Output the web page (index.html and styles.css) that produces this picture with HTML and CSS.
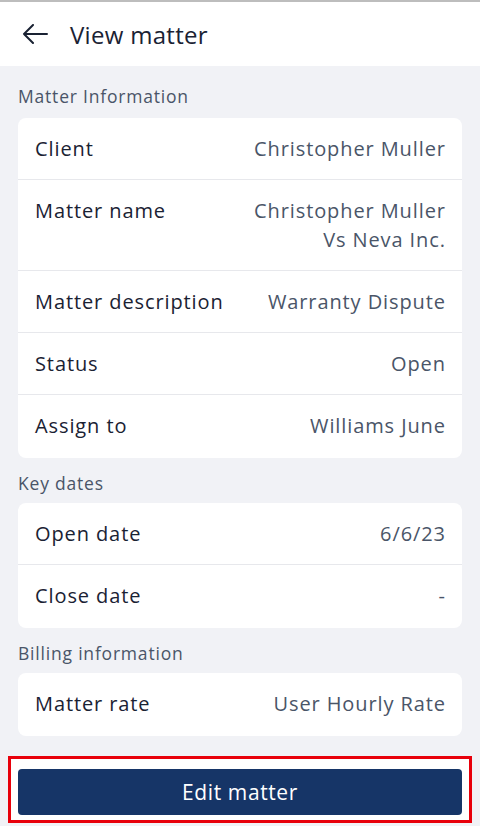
FILE: index.html
```html
<!DOCTYPE html>
<html>
<head>
<meta charset="utf-8">
<link rel="stylesheet" href="styles.css">
</head>
<body>
<div class="app">
  <header class="header">
    <svg class="back" width="26" height="20" viewBox="0 0 26 20"><path d="M25 10H2M11 1L2 10l9 9" fill="none" stroke="#1a2233" stroke-width="2" stroke-linecap="round" stroke-linejoin="round"/></svg>
    <h1 class="title">View matter</h1>
  </header>
  <main class="content">
    <div class="section-title first">Matter Information</div>
    <div class="card">
      <div class="row"><span class="label">Client</span><span class="value">Christopher Muller</span></div>
      <div class="row"><span class="label">Matter name</span><span class="value">Christopher Muller<br>Vs Neva Inc.</span></div>
      <div class="row"><span class="label">Matter description</span><span class="value">Warranty Dispute</span></div>
      <div class="row"><span class="label">Status</span><span class="value">Open</span></div>
      <div class="row"><span class="label">Assign to</span><span class="value">Williams June</span></div>
    </div>
    <div class="section-title">Key dates</div>
    <div class="card">
      <div class="row"><span class="label">Open date</span><span class="value">6/6/23</span></div>
      <div class="row"><span class="label">Close date</span><span class="value">-</span></div>
    </div>
    <div class="section-title">Billing information</div>
    <div class="card">
      <div class="row"><span class="label">Matter rate</span><span class="value">User Hourly Rate</span></div>
    </div>
  </main>
  <footer class="footer">
    <button class="btn">Edit matter</button>
  </footer>
</div>
</body>
</html>
```
FILE: styles.css
```css
* { box-sizing: border-box; }
html, body { margin: 0; padding: 0; }
body { font-family: "Open Sans", "Noto Sans", sans-serif; background: #f1f2f6; color: #1a2233; }
.app { width: 480px; height: 826px; display: flex; flex-direction: column; border-top: 2px solid #bdbdbd; }
.header { height: 64px; background: #fff; display: flex; align-items: center; padding-left: 22px; flex: none; }
.back { margin-right: 22px; flex: none; }
.title { margin: 0; font-size: 24px; font-weight: 500; color: #1a2233; letter-spacing: 0.3px; }
.content { flex: 1; padding: 0 18px; }
.section-title { font-size: 17.5px; color: #4a5568; line-height: 20px; letter-spacing: 0.8px; padding-top: 15px; padding-bottom: 10px; }
.section-title.first { padding-top: 20px; padding-bottom: 12px; }
.card { background: #fff; border-radius: 8px; }
.row { display: flex; justify-content: space-between; align-items: flex-start; padding: 16px 17px; border-bottom: 1px solid #e7e8ec; font-size: 20px; line-height: 29px; letter-spacing: 0.9px; }
.row:last-child { border-bottom: none; padding-bottom: 18px; }
.label { color: #1a2233; }
.value { color: #4a5568; text-align: right; margin-right: -0.9px; }
.footer { background: #fff; height: 67px; flex: none; border: 3px solid #e8000b; margin: 0 8px 3px; padding: 10px 7px 0; }
.btn { width: 100%; height: 46px; background: #163567; color: #fff; border: none; border-radius: 4px; font-family: inherit; font-size: 21px; font-weight: 500; letter-spacing: 0.6px; }
```
